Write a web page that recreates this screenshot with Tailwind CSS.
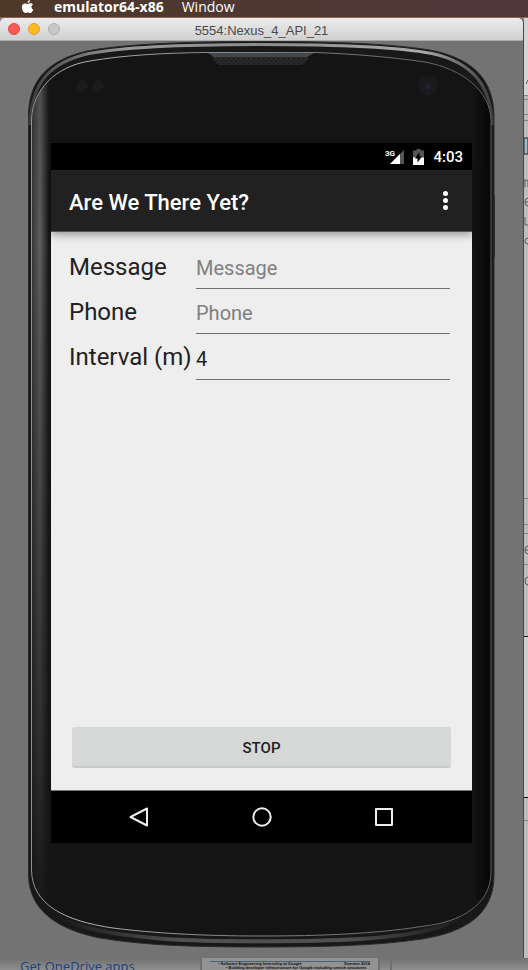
<!DOCTYPE html>
<html lang="en">
<head>
<meta charset="utf-8">
<meta name="viewport" content="width=device-width, initial-scale=1">
<title>5554:Nexus_4_API_21</title>
<script src="https://cdn.jsdelivr.net/npm/@tailwindcss/browser@4"></script>
</head>
<body class="min-h-screen flex flex-col overflow-hidden bg-[#8a8a8a] font-['Roboto',sans-serif]">
<header class="h-[18px] shrink-0 flex items-start gap-5 pl-[21px] bg-linear-to-r from-[#4e3828] to-[#50373a] border-b border-[#8c6450] text-white font-['Open_Sans',sans-serif] text-sm leading-[14px]">
  <svg class="w-[13px] h-[14px]" viewBox="0 0 13 15" fill="#fff" role="img" aria-label="Apple menu"><path d="M9.2 0C9.300 1.500 8.100 3.200 6.500 3.200 6.400 1.700 7.600.3 9.200 0ZM12.300 5C11.100 5.700 10.700 6.600 10.800 7.700 10.900 8.900 11.600 9.700 12.700 10.200 12.100 12 10.900 13.900 9.500 13.900 8.500 13.900 8.100 13.300 6.900 13.300 5.700 13.300 5.200 13.900 4.300 13.900 2.600 13.900.4 10.900.4 7.800.4 5.300 1.900 3.700 3.700 3.700 4.900 3.700 5.800 4.400 6.600 4.400 7.300 4.400 8.500 3.600 9.800 3.600 10.700 3.600 11.700 4.100 12.300 5Z"/></svg>
  <nav class="flex gap-[18px]">
    <button class="font-bold">emulator64-x86</button>
    <button>Window</button>
  </nav>
</header>

<div class="flex">
  <main class="flex-1 min-w-0 bg-[#737373] rounded-t-[5px] border-r border-[#484848]">
    <div class="h-[23px] relative flex items-center justify-center rounded-t-[5px] bg-linear-to-b from-[#ececec] to-[#d0d0d0] border-b border-[#aaa]">
      <div class="absolute left-2 flex gap-2">
        <button aria-label="Close" class="size-3 rounded-full bg-[#fc5753] border border-[#df4744]"></button>
        <button aria-label="Minimize" class="size-3 rounded-full bg-[#fdb924] border border-[#de9f34]"></button>
        <button aria-label="Zoom" disabled class="size-3 rounded-full bg-[#c8c8c8] border border-[#b0b0b0]"></button>
      </div>
      <h1 class="pt-1 font-['Liberation_Sans',sans-serif] text-[13px] leading-4 text-[#4a4a4a]">5554:Nexus_4_API_21</h1>
    </div>

    <section aria-label="Phone" class="relative mx-7 pt-[102px] pb-[115px] px-[23px]">
      <svg class="absolute inset-0 w-full h-full" viewBox="28 41 467 917" preserveAspectRatio="none" aria-hidden="true">
        <defs>
          <linearGradient id="side" x1="0" y1="0" x2="1" y2="0"><stop offset="0" stop-color="#333"/><stop offset=".5" stop-color="#5f5f5f"/><stop offset="1" stop-color="#161616"/></linearGradient>
          <linearGradient id="rightSide" x1="0" y1="0" x2="1" y2="0"><stop offset="0" stop-color="#141414"/><stop offset="1" stop-color="#060606"/></linearGradient>
          <linearGradient id="fade" x1="0" y1="0" x2="0" y2="1"><stop offset="0" stop-color="#fff" stop-opacity=".8"/><stop offset=".2" stop-color="#fff"/><stop offset=".8" stop-color="#fff" stop-opacity=".35"/><stop offset="1" stop-color="#fff" stop-opacity="0"/></linearGradient>
          <linearGradient id="shine" x1="0" y1="0" x2="1" y2="0"><stop offset="0" stop-color="#3c3c3c"/><stop offset=".08" stop-color="#666"/><stop offset=".2" stop-color="#999"/><stop offset=".5" stop-color="#8c8c8c"/><stop offset=".85" stop-color="#aaa"/><stop offset="1" stop-color="#3c3c3c"/></linearGradient>
          <linearGradient id="foot" x1="0" y1="0" x2="1" y2="0"><stop offset="0" stop-color="#4f514f" stop-opacity="0"/><stop offset=".3" stop-color="#4f514f"/><stop offset=".7" stop-color="#4f514f"/><stop offset="1" stop-color="#4f514f" stop-opacity="0"/></linearGradient>
          <linearGradient id="edge" x1="0" y1="0" x2="1" y2="0"><stop offset="0" stop-color="#8f9193"/><stop offset=".1" stop-color="#b0b3b5"/><stop offset=".4" stop-color="#84888c"/><stop offset="1" stop-color="#5c5f60"/></linearGradient>
          <pattern id="mesh" width="5" height="5" patternUnits="userSpaceOnUse"><rect width="5" height="5" fill="#292929"/><circle cx="1.200" cy="1.200" r=".8" fill="#111"/><circle cx="3.700" cy="3.700" r=".8" fill="#111"/></pattern>
          <clipPath id="face"><path d="M31 120C32 90 56 66 90 61C125 55 165 53 207 53H315C355 54 390 57 425 62C462 69 490 90 491 120V872C491 905 460 922 425 926C375 934 320 936 261 936C202 936 152 933 113 928C65 921 32 905 31 870Z"/></clipPath>
          <mask id="fadeMask"><rect x="28" y="75" width="30" height="860" fill="url(#fade)"/></mask>
        </defs>
        <path d="M28.500 115C29 80 48 60 87 51C130 43 200 41.500 261 41.500C322 41.500 392 43 435 51C474 60 493 80 494 115V875C494 915 465 932 422 939C375 946 320 947 261 947C202 947 147 946 100 938C60 930 29 912 28.500 875Z" fill="#181818" stroke="#2a2a2a"/>
        <path d="M30 125C31 82 51 62 89 53.500C130 46 200 44.500 261 44.500C322 44.500 392 46 432 53.500C471 62 491 84 492.500 125" fill="none" stroke="url(#shine)" stroke-width="3"/>
        <path d="M56 915C80 931 130 936 165 939C210 942 310 942 360 939C405 936 440 931 466 915" fill="none" stroke="url(#foot)" stroke-width="4"/>
        <path d="M31 120C32 90 56 66 90 61C125 55 165 53 207 53H315C355 54 390 57 425 62C462 69 490 90 491 120V872C491 905 460 922 425 926C375 934 320 936 261 936C202 936 152 933 113 928C65 921 32 905 31 870Z" fill="#141414"/>
        <g clip-path="url(#face)"><rect x="31" y="53" width="18" height="890" fill="url(#side)" mask="url(#fadeMask)"/><rect x="473" y="90" width="18" height="810" fill="url(#rightSide)"/></g>
        <path d="M31.500 120C32 90 56 66 90 61C125 55 165 53 207 52.500H315C355 54 390 57 425 62C462 69 490 90 491 120V872C491 905 460 922 425 926C375 934 320 936 261 936C202 936 152 933 113 928C65 921 32 905 31.500 870Z" fill="none" stroke="url(#edge)"/>
        <path d="M208 53L214 57H307L314 53Z" fill="#43474b"/>
        <path d="M212 57H309C306 62 305 65 300 65H221C216 65 215 61 212 57Z" fill="url(#mesh)"/>
        <circle cx="82" cy="86" r="6" fill="#1a1a1a"/><circle cx="98" cy="86" r="6" fill="#1a1a1a"/>
        <circle cx="428" cy="86" r="10" fill="#1a1a1c"/><circle cx="428" cy="86" r="3" fill="#211f36"/>
        <rect x="493.500" y="195" width="1.500" height="62" fill="#2c2c2c"/>
      </svg>

      <div class="relative h-[700px] flex flex-col bg-[#eee] text-[#212121]">
        <div class="h-[27px] pt-px flex items-center justify-end gap-[9px] pr-[9px] bg-black text-white text-[15px] leading-5 font-medium">
          <svg class="w-5 h-4" viewBox="0 0 20 16" role="img" aria-label="3G signal"><path d="M20 1V15H6Z" fill="#555"/><path d="M16 5V15H6Z" fill="#fff"/><text x="1" y="7" font-size="8" font-weight="700" fill="#fff" font-family="Roboto">3G</text></svg>
          <svg class="w-[11px] h-4" viewBox="0 0 11 16" role="img" aria-label="Battery charging"><path d="M3.500 0H7.500V1.500H11V16H0V1.500H3.500Z" fill="#555"/><path d="M0 8.500H11V16H0Z" fill="#fff"/><path d="M6.500 3V7.500H9L4.500 13.500V9.500H2Z" fill="#000"/></svg>
          <time>4:03</time>
        </div>
        <div class="h-[62px] relative flex items-center justify-between pl-[18px] pr-[19px] bg-[#212121] text-white border-b border-[#555] shadow-[0_3px_8px_rgba(0,0,0,0.35)]">
          <h2 class="pt-1 text-[22px] leading-7 font-medium">Are We There Yet?</h2>
          <button aria-label="More options" class="w-4 h-6 flex flex-col items-center justify-center gap-[2px]"><span class="size-[5px] rounded-full bg-white"></span><span class="size-[5px] rounded-full bg-white"></span><span class="size-[5px] rounded-full bg-white"></span></button>
        </div>
        <form class="flex-1 flex flex-col pl-[18px] pr-[21px] pt-[12px] pb-[22px]">
          <div class="grid grid-cols-[127px_1fr] pr-px">
            <label for="message" class="h-[45px] pt-[7px] text-2xl leading-8 whitespace-nowrap">Message</label>
            <input id="message" type="text" placeholder="Message" class="min-w-0 h-[45px] pt-1 text-xl border-b border-[#707070] outline-none placeholder:text-[#808080]">
            <label for="phone" class="h-[45px] pt-[7px] text-2xl leading-8 whitespace-nowrap">Phone</label>
            <input id="phone" type="tel" placeholder="Phone" class="min-w-0 h-[45px] pt-1 text-xl border-b border-[#707070] outline-none placeholder:text-[#808080]">
            <label for="interval" class="h-[46px] pt-[7px] text-2xl leading-8 whitespace-nowrap">Interval (m)</label>
            <input id="interval" type="text" inputmode="numeric" value="4" class="min-w-0 h-[46px] pt-1 text-xl border-b border-[#707070] outline-none">
          </div>
          <button type="button" class="mt-auto ml-[3px] h-[41px] pt-0.5 rounded-[3px] bg-[#d6d8d7] border-b-2 border-[#c8cac9] text-[15px] leading-5 font-medium">STOP</button>
        </form>
        <nav class="h-[53px] flex items-center justify-between px-[78px] bg-black border-t border-[#777]">
          <button aria-label="Back"><svg class="size-5" viewBox="0 0 20 20" fill="none" stroke="#eee" stroke-width="2" stroke-linejoin="round"><path d="M18 1.500V18.500L1.500 10Z"/></svg></button>
          <button aria-label="Home"><svg class="size-5" viewBox="0 0 20 20" fill="none" stroke="#eee" stroke-width="2"><circle cx="10" cy="10" r="8.700"/></svg></button>
          <button aria-label="Recent apps"><svg class="size-5" viewBox="0 0 20 20" fill="none" stroke="#eee" stroke-width="2" stroke-linejoin="round"><rect x="2" y="2" width="16" height="16"/></svg></button>
        </nav>
      </div>
    </section>
  </main>
  <svg class="w-1 shrink-0" viewBox="524 18 4 940" preserveAspectRatio="none" aria-hidden="true">
    <rect x="524" y="18" width="4" height="940" fill="#bebdbe"/>
    <rect x="524" y="18" width="4" height="77" fill="#d4d4d4"/>
    <path d="M524 95.500H528M524 99.500H528M524 114.500H528M524 120.500H528M524 498.500H528M524 524.500H528M524 533.500H528M524 564.500H528M524 820.500H528" stroke="#858585"/>
    <rect x="524" y="138" width="4" height="16" fill="#9dbcc9" stroke="#222"/>
    <path d="M526 84L528 80M525 179V187M525 181Q527 179 528 181V187M525 202H528M528 198Q525 198 525 202Q525 206 528 206M525 217V225H528M528 238Q525 238 525 241T528 244M525 550H528M528 546Q525 546 525 550T528 554M528 577Q525 577 525 581T528 585" fill="none" stroke="#5c5866"/>
    <path d="M524 636.500H528M524 797.500H528" stroke="#111"/>
    <rect x="524" y="637" width="4" height="160" fill="#cfcfcf"/>
  </svg>
</div>

<footer class="h-3 flex-1 flex overflow-hidden bg-linear-to-b from-[#707070] to-[#999]">
  <a href="#" class="ml-5 w-[180px] shrink-0 font-['Open_Sans',sans-serif] text-[13px] leading-4 text-[#1e407c] whitespace-nowrap">Get OneDrive apps</a>
  <div class="w-[180px] shrink-0 pl-2 border-x-2 border-[#707070] bg-[#929292] font-['Liberation_Sans',sans-serif] text-[4px] leading-[4px] font-bold text-[#111] whitespace-nowrap">
    <p class="mt-[3px] w-40 pl-2 flex justify-between border-t border-[#4c6275]"><span>• Software Engineering Internship at Google</span><span>Summer 2014</span></p>
    <p class="pl-4">• Building developer infrastructure for Google including search structures</p>
  </div>
  <div class="ml-[10px] flex-1 border-l-2 border-[#707070]"></div>
</footer>
</body>
</html>
